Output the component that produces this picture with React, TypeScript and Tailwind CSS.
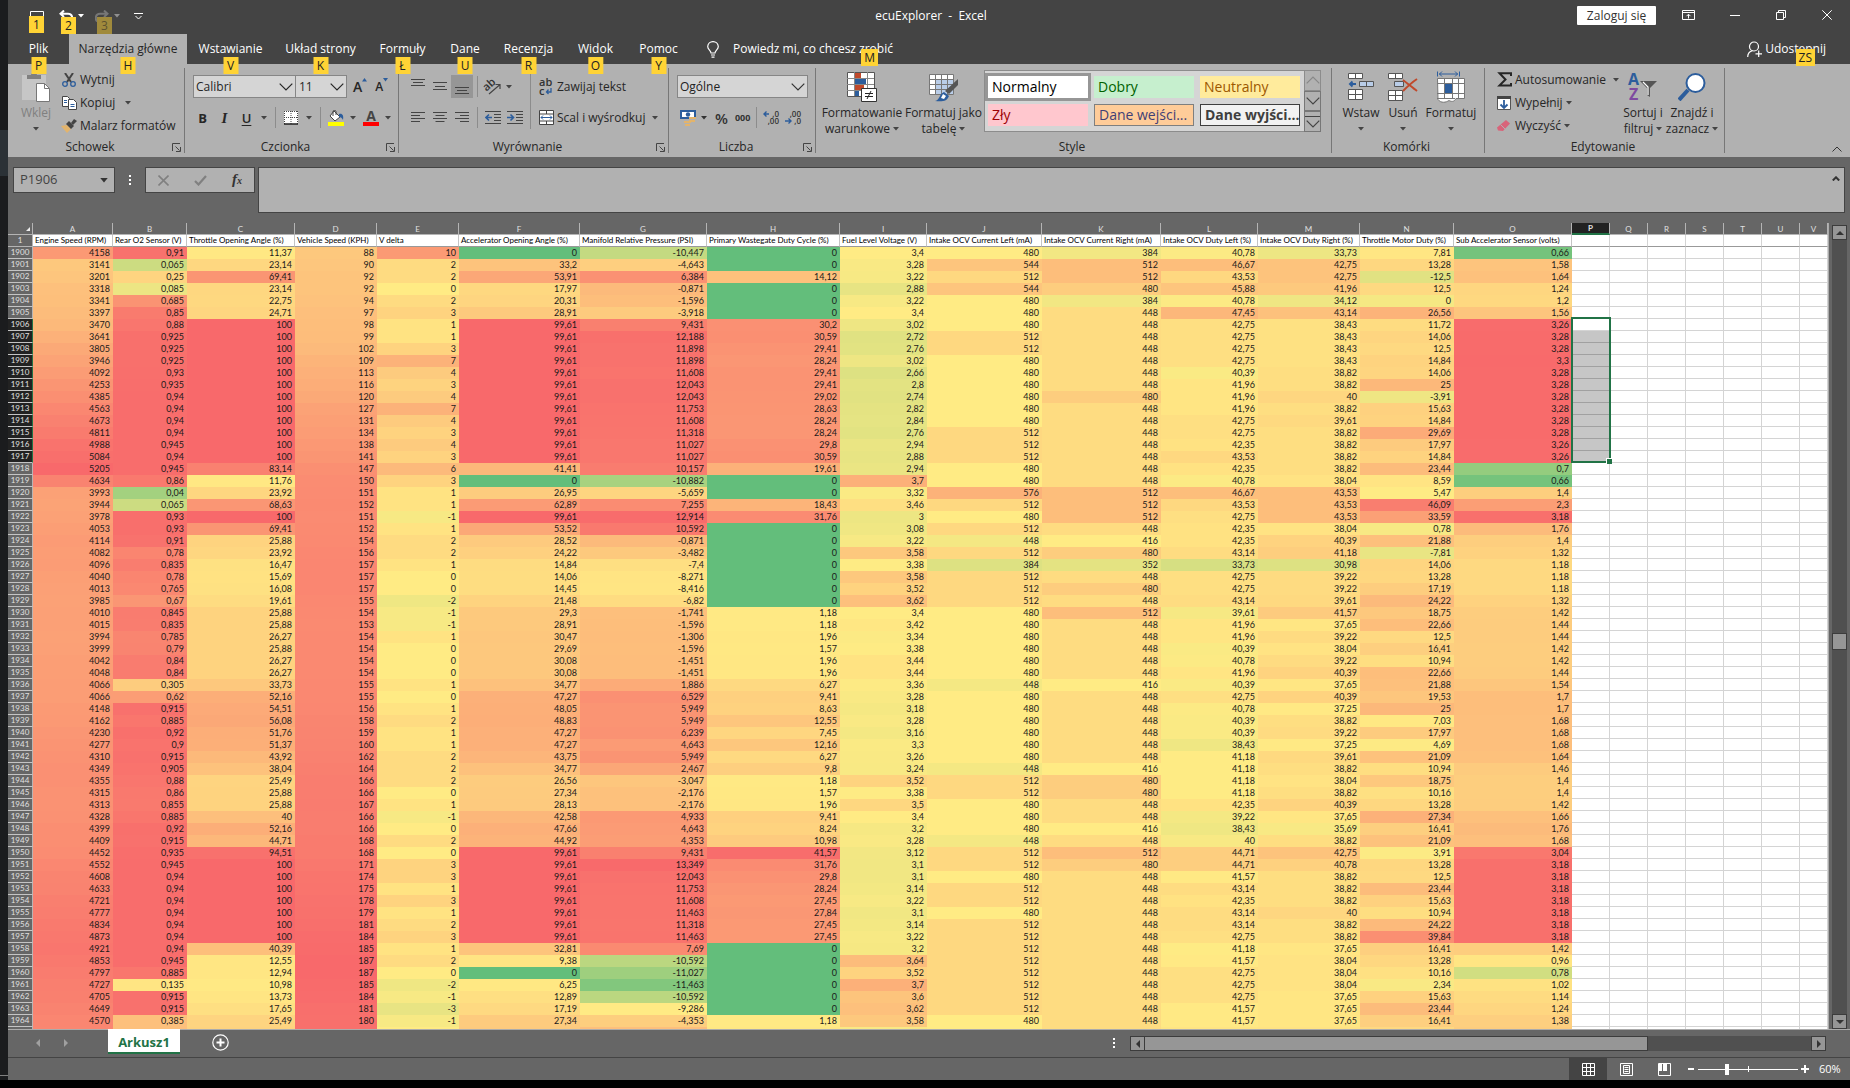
import type { ReactNode } from 'react';

// Three-point colour scale per column: low (green), mid (yellow), high (red)
interface Column {
  letter: string;
  title: string;
  width: string;
  scale: [number, number, number];
}

const columns: Column[] = [
  { letter: 'A', title: 'Engine Speed (RPM)', width: 'w-[80px]', scale: [0, 2378, 5205] },
  { letter: 'B', title: 'Rear O2 Sensor (V)', width: 'w-[74px]', scale: [0, 0.097, 0.97] },
  { letter: 'C', title: 'Throttle Opening Angle (%)', width: 'w-[108px]', scale: [0, 9.4, 100] },
  { letter: 'D', title: 'Vehicle Speed (KPH)', width: 'w-[82px]', scale: [0, 51, 187] },
  { letter: 'E', title: 'V delta', width: 'w-[82px]', scale: [-20, 0, 16] },
  { letter: 'F', title: 'Accelerator Opening Angle (%)', width: 'w-[121px]', scale: [0, 4, 99.61] },
  { letter: 'G', title: 'Manifold Relative Pressure (PSI)', width: 'w-[127px]', scale: [-11.95, -9.53, 13.5] },
  { letter: 'H', title: 'Primary Wastegate Duty Cycle (%)', width: 'w-[133px]', scale: [0, 0.5, 43] },
  { letter: 'I', title: 'Fuel Level Voltage (V)', width: 'w-[87px]', scale: [0, 3.4, 4.06] },
  { letter: 'J', title: 'Intake OCV Current Left (mA)', width: 'w-[115px]', scale: [44, 480, 698] },
  { letter: 'K', title: 'Intake OCV Current Right (mA)', width: 'w-[119px]', scale: [40, 416, 694] },
  { letter: 'L', title: 'Intake OCV Duty Left (%)', width: 'w-[97px]', scale: [12.5, 41.3, 56.8] },
  { letter: 'M', title: 'Intake OCV Duty Right (%)', width: 'w-[102px]', scale: [10, 36.9, 56] },
  { letter: 'N', title: 'Throttle Motor Duty (%)', width: 'w-[94px]', scale: [-91, 6, 54] },
  { letter: 'O', title: 'Sub Accelerator Sensor (volts)', width: 'w-[118px]', scale: [0.636, 0.84, 3.32] },
];

const emptyLetters = ['P', 'Q', 'R', 'S', 'T', 'U', 'V'];

const FIRST_ROW = 1900;
const SELECTION_START = 1906;
const SELECTION_END = 1917;

const rows = `4158 0,91 11,37 88 10 0 -10,447 0 3,4 480 384 40,78 33,73 7,81 0,66
3141 0,065 23,14 90 2 33,2 -4,643 0 3,28 544 512 46,67 42,75 13,28 1,58
3201 0,25 69,41 92 2 53,91 6,384 14,12 3,22 512 512 43,53 42,75 -12,5 1,64
3318 0,085 23,14 92 0 17,97 -0,871 0 2,88 544 480 45,88 41,96 12,5 1,24
3341 0,685 22,75 94 2 20,31 -1,596 0 3,22 480 384 40,78 34,12 0 1,2
3397 0,85 24,71 97 3 28,91 -3,918 0 3,4 480 448 47,45 43,14 26,56 1,56
3470 0,88 100 98 1 99,61 9,431 30,2 3,02 480 448 42,75 38,43 11,72 3,26
3641 0,925 100 99 1 99,61 12,188 30,59 2,72 512 448 42,75 38,43 14,06 3,28
3805 0,925 100 102 3 99,61 11,898 29,41 2,76 512 448 42,75 38,43 12,5 3,28
3946 0,925 100 109 7 99,61 11,898 28,24 3,02 480 448 42,75 38,43 14,84 3,3
4092 0,93 100 113 4 99,61 11,608 29,41 2,66 480 448 40,39 38,82 14,06 3,28
4253 0,935 100 116 3 99,61 12,043 29,41 2,8 480 448 41,96 38,82 25 3,28
4385 0,94 100 120 4 99,61 12,043 29,02 2,74 480 480 41,96 40 -3,91 3,28
4563 0,94 100 127 7 99,61 11,753 28,63 2,82 480 448 41,96 38,82 15,63 3,28
4673 0,94 100 131 4 99,61 11,608 28,24 2,84 480 448 42,75 39,61 14,84 3,28
4811 0,94 100 134 3 99,61 11,318 28,24 2,76 512 448 42,75 38,82 29,69 3,28
4988 0,945 100 138 4 99,61 11,027 29,8 2,94 512 448 42,35 38,82 17,97 3,26
5084 0,94 100 141 3 99,61 11,027 30,59 2,88 512 448 43,53 38,82 14,84 3,26
5205 0,945 83,14 147 6 41,41 10,157 19,61 2,94 480 448 42,35 38,82 23,44 0,7
4634 0,86 11,76 150 3 0 -10,882 0 3,7 480 448 40,78 38,04 8,59 0,66
3993 0,04 23,92 151 1 26,95 -5,659 0 3,32 576 512 46,67 43,53 5,47 1,4
3944 0,065 68,63 152 1 62,89 7,255 18,43 3,46 512 512 43,53 43,53 46,09 2,3
3978 0,93 100 151 -1 99,61 12,914 31,76 3 480 512 42,75 43,53 33,59 3,18
4053 0,93 69,41 152 1 53,52 10,592 0 3,08 512 448 42,35 38,04 0,78 1,76
4114 0,91 25,88 154 2 28,52 -0,871 0 3,22 448 416 42,35 40,39 21,88 1,4
4082 0,78 23,92 156 2 24,22 -3,482 0 3,58 512 480 43,14 41,18 -7,81 1,32
4096 0,835 16,47 157 1 14,84 -7,4 0 3,38 384 352 33,73 30,98 14,06 1,18
4040 0,78 15,69 157 0 14,06 -8,271 0 3,58 512 448 42,75 39,22 13,28 1,18
4013 0,765 16,08 157 0 14,45 -8,416 0 3,52 512 480 42,75 39,22 17,19 1,18
3985 0,67 19,61 155 -2 21,48 -6,82 0 3,62 512 448 43,14 39,61 24,22 1,32
4010 0,845 25,88 154 -1 29,3 -1,741 1,18 3,4 480 512 39,61 41,57 18,75 1,42
4015 0,835 25,88 153 -1 28,91 -1,596 1,18 3,42 480 448 41,96 37,65 22,66 1,44
3994 0,785 26,27 154 1 30,47 -1,306 1,96 3,34 480 448 41,96 39,22 12,5 1,44
3999 0,79 25,88 154 0 29,69 -1,596 1,57 3,38 480 448 40,39 38,04 16,41 1,42
4042 0,84 26,27 154 0 30,08 -1,451 1,96 3,44 480 448 40,78 39,22 10,94 1,42
4048 0,84 26,27 154 0 30,08 -1,451 1,96 3,44 480 448 41,96 40,39 22,66 1,44
4066 0,305 33,73 155 1 34,77 1,886 6,27 3,36 448 416 40,39 37,65 21,88 1,54
4066 0,62 52,16 155 0 47,27 6,529 9,41 3,28 480 448 42,75 40,39 19,53 1,7
4148 0,915 54,51 156 1 48,05 5,949 8,63 3,18 480 448 40,78 37,25 25 1,7
4162 0,885 56,08 158 2 48,83 5,949 12,55 3,28 480 448 40,39 38,82 7,03 1,68
4230 0,92 51,76 159 1 47,27 6,239 7,45 3,16 480 448 40,39 39,22 17,97 1,68
4277 0,9 51,37 160 1 47,27 4,643 12,16 3,3 480 448 38,43 37,25 4,69 1,68
4310 0,915 43,92 162 2 43,75 5,949 6,27 3,26 480 448 41,18 39,61 21,09 1,64
4349 0,905 38,04 164 2 34,77 2,467 9,8 3,24 448 416 41,18 38,82 10,94 1,46
4355 0,88 25,49 166 2 26,56 -3,047 1,18 3,52 512 480 41,18 38,04 18,75 1,4
4315 0,86 25,88 166 0 27,34 -2,176 1,57 3,38 512 480 41,18 38,82 10,16 1,4
4313 0,855 25,88 167 1 28,13 -2,176 1,96 3,5 480 448 42,35 40,39 13,28 1,42
4328 0,885 40 166 -1 42,58 4,933 9,41 3,4 480 448 39,22 37,65 27,34 1,66
4399 0,92 52,16 166 0 47,66 4,643 8,24 3,2 480 416 38,43 35,69 16,41 1,76
4409 0,915 44,71 168 2 44,92 4,353 10,98 3,28 448 448 40 38,82 21,09 1,68
4452 0,935 94,51 168 0 99,61 9,431 41,57 3,12 512 512 44,71 42,75 3,91 3,04
4552 0,945 100 171 3 99,61 13,349 31,76 3,1 512 480 44,71 40,78 13,28 3,18
4608 0,94 100 174 3 99,61 12,043 29,8 3,1 480 448 41,57 38,82 12,5 3,18
4633 0,94 100 175 1 99,61 11,753 28,24 3,14 512 448 43,14 38,82 23,44 3,18
4721 0,94 100 178 3 99,61 11,608 27,45 3,22 512 448 42,35 38,82 15,63 3,18
4777 0,94 100 179 1 99,61 11,463 27,84 3,1 480 448 43,14 40 10,94 3,18
4834 0,94 100 181 2 99,61 11,318 27,45 3,14 512 448 43,14 38,82 24,22 3,18
4873 0,94 100 184 3 99,61 11,463 27,45 3,22 512 448 42,75 38,82 39,84 3,18
4921 0,94 40,39 185 1 32,81 7,69 0 3,2 512 448 41,18 37,65 16,41 1,42
4853 0,945 12,55 187 2 9,38 -10,592 0 3,64 512 448 41,57 38,04 13,28 0,96
4797 0,885 12,94 187 0 0 -11,027 0 3,52 512 448 42,75 38,04 10,16 0,78
4727 0,135 10,98 185 -2 6,25 -11,463 0 3,7 512 448 42,75 38,04 2,34 1,02
4705 0,915 13,73 184 -1 12,89 -10,592 0 3,6 512 448 42,75 37,65 15,63 1,14
4649 0,915 17,65 181 -3 17,19 -9,286 0 3,62 512 448 41,57 37,65 23,44 1,24
4570 0,385 25,49 180 -1 27,34 -4,353 1,18 3,58 480 448 41,57 37,65 16,41 1,38
4552 0,385 26,27 180 0 28,13 -1,741 1,57 3,28 480 448 41,96 38,04 12,5 1,42`
  .split('\n')
  .map((line) => line.split(' '));

const GREEN = [99, 190, 123];
const YELLOW = [255, 235, 132];
const RED = [248, 105, 107];

function scaleColor(text: string, [low, mid, high]: [number, number, number]) {
  const value = parseFloat(text.replace(',', '.'));
  const [from, to] = value < mid ? [GREEN, YELLOW] : [YELLOW, RED];
  const raw = value < mid ? (value - low) / (mid - low) : (value - mid) / (high - mid);
  const t = Math.min(1, Math.max(0, raw));
  return `rgb(${from.map((c, i) => Math.round(c + (to[i] - c) * t)).join(',')})`;
}

function Arrow({ className = '' }: { className?: string }) {
  return (
    <svg viewBox="0 0 6 4" className={`w-[6px] h-[4px] shrink-0 ${className}`}>
      <path d="M0 0h6L3 3.6z" fill="currentColor" />
    </svg>
  );
}

function Chevron({ className = '' }: { className?: string }) {
  return (
    <svg viewBox="0 0 14 8" className={`w-[14px] h-[8px] ${className}`} fill="none" stroke="currentColor">
      <path d="M.7.7 7 7 13.3.7" strokeWidth="1.2" />
    </svg>
  );
}

function KeyTip({ children, className = '' }: { children: ReactNode; className?: string }) {
  return (
    <span
      className={`absolute z-10 h-[17px] min-w-[15px] px-[3px] text-center text-[12px] leading-[17px] bg-[#ffd335] text-[#222] ${className}`}
    >
      {children}
    </span>
  );
}

function TitleBar() {
  return (
    <header className="relative flex items-center h-[34px] text-white">
      <div className="flex items-start pl-[22px] pt-[10px] h-full flex-1">
        <button type="button" aria-label="Zapisz" className="relative w-[14px] h-[16px]">
          <svg viewBox="0 0 14 14" className="w-[14px] h-[14px]" fill="none" stroke="#fff">
            <path d="M.5.5h13v13H.5z" />
          </svg>
          <KeyTip className="-left-px top-[6px]">1</KeyTip>
        </button>
        <button type="button" aria-label="Cofnij" className="relative flex items-center ml-[15px] gap-[5px]">
          <svg viewBox="0 0 14 12" className="w-[14px] h-[12px]" fill="none" stroke="#fff" strokeWidth="2">
            <path d="M5 .5 1.5 3.8 5 7M2 3.8h7c3 0 4.2 2 4.2 4.5S12 11.5 10 11.5" />
          </svg>
          <Arrow />
          <KeyTip className="left-[2px] top-[7px]">2</KeyTip>
        </button>
        <button type="button" aria-label="Ponów" className="relative flex items-center ml-[11px] gap-[5px] text-[#909090]">
          <svg viewBox="0 0 14 12" className="w-[14px] h-[12px]" fill="none" stroke="#777" strokeWidth="2">
            <path d="M9 .5 12.5 3.8 9 7M12 3.8H5C2 3.8.8 5.8.8 8.3S2 11.5 4 11.5" />
          </svg>
          <Arrow />
          <span className="absolute z-10 left-[2px] top-[7px] h-[17px] w-[15px] text-center text-[12px] leading-[17px] bg-[#a08a3c] text-[#5c5230]">
            3
          </span>
        </button>
        <button type="button" aria-label="Dostosuj pasek" className="ml-[14px] mt-[3px]">
          <svg viewBox="0 0 9 7" className="w-[9px] h-[7px]" fill="none" stroke="#fff">
            <path d="M0 .5h9M1.5 3l3 3 3-3" />
          </svg>
        </button>
      </div>
      <h1 className="text-[12px] whitespace-pre mt-[-2px]">ecuExplorer  -  Excel</h1>
      <div className="flex items-center justify-end flex-1 pr-[18px] mt-[-4px] h-full">
        <button type="button" className="w-[79px] h-[19px] text-[12px] leading-[19px] bg-white text-[#333] rounded-[1px] mr-[26px]">
          Zaloguj się
        </button>
        <button type="button" aria-label="Opcje wstążki" className="mr-[35px]">
          <svg viewBox="0 0 13 10" className="w-[13px] h-[10px]" fill="none" stroke="#fff">
            <path d="M.5.5h12v9H.5zM.5 2.5h12M6.5 8.5v-4M4.5 6.2l2-2 2 2" />
          </svg>
        </button>
        <button type="button" aria-label="Minimalizuj" className="w-[10px] h-px bg-white mr-[36px]" />
        <button type="button" aria-label="Przywróć" className="mr-[36px]">
          <svg viewBox="0 0 10 10" className="w-[10px] h-[10px]" fill="none" stroke="#fff">
            <path d="M.5 2.5h7v7h-7zM2.5 2.5v-2h7v7h-2" />
          </svg>
        </button>
        <button type="button" aria-label="Zamknij">
          <svg viewBox="0 0 10 10" className="w-[10px] h-[10px]" fill="none" stroke="#fff">
            <path d="m.3.3 9.4 9.4M9.7.3.3 9.7" />
          </svg>
        </button>
      </div>
    </header>
  );
}

const tabs = [
  { label: 'Plik', tip: 'P', width: 'w-[61px]' },
  { label: 'Narzędzia główne', tip: 'H', width: 'w-[118px]', active: true },
  { label: 'Wstawianie', tip: 'V', width: 'w-[87px]' },
  { label: 'Układ strony', tip: 'K', width: 'w-[93px]' },
  { label: 'Formuły', tip: 'Ł', width: 'w-[71px]' },
  { label: 'Dane', tip: 'U', width: 'w-[54px]' },
  { label: 'Recenzja', tip: 'R', width: 'w-[73px]' },
  { label: 'Widok', tip: 'O', width: 'w-[61px]' },
  { label: 'Pomoc', tip: 'Y', width: 'w-[65px]' },
];

function TabBar() {
  return (
    <nav className="flex h-[30px] text-[12px] text-white">
      {tabs.map((tab) => (
        <button
          key={tab.label}
          type="button"
          className={`relative shrink-0 whitespace-nowrap ${tab.width} ${tab.active ? 'bg-[#b1b1b1] text-[#262626]' : ''}`}
        >
          {tab.label}
          <KeyTip className="left-1/2 -translate-x-1/2 top-[23px]">{tab.tip}</KeyTip>
        </button>
      ))}
      <button type="button" className="relative flex items-center ml-[16px] whitespace-nowrap">
        <svg viewBox="0 0 12 17" className="w-[12px] h-[17px] mr-[14px]" fill="none" stroke="#fff" strokeWidth="1.2">
          <path d="M4 12c0-2.5-3.3-3.5-3.3-6.5A5.2 5.2 0 0 1 6 .7a5.2 5.2 0 0 1 5.300 4.800C11.300 8.500 8 9.500 8 12zM4 14h4M4.500 16.200h3" />
        </svg>
        Powiedz mi, co chcesz zrobić
        <KeyTip className="right-[15px] top-[15px]">M</KeyTip>
      </button>
      <button type="button" className="relative flex items-center ml-auto mr-[24px]">
        <svg viewBox="0 0 15 17" className="w-[15px] h-[17px] mr-[3px]" fill="none" stroke="#fff" strokeWidth="1.2">
          <circle cx="7" cy="5.5" r="4.5" />
          <path d="M.7 16c0-3.5 2-5.5 4.8-6.3M8.5 12.800H15M11.700 9.500V16" />
        </svg>
        Udostępnij
        <KeyTip className="right-[11px] top-[15px]">ZS</KeyTip>
      </button>
    </nav>
  );
}

function Group({
  label,
  width,
  launcher = false,
  children,
}: {
  label: string;
  width: string;
  launcher?: boolean;
  children: ReactNode;
}) {
  return (
    <section className={`flex flex-col shrink-0 my-1 border-r border-[#777] ${width}`}>
      <div className="flex h-[73px]">{children}</div>
      <div className="flex items-center h-[12px] pr-[3px]">
        <h2 className="flex-1 text-center text-[12px] leading-[12px]">{label}</h2>
        {launcher && (
          <button type="button" aria-label={`${label} – opcje`}>
            <svg viewBox="0 0 9 9" className="w-[9px] h-[9px]" fill="none" stroke="#444">
              <path d="M.5 8V.5H8M3.5 3.5l4 4M8.5 4v4.500H4" />
            </svg>
          </button>
        )}
      </div>
    </section>
  );
}

function RowButton({ icon, label, arrow = '' }: { icon: ReactNode; label: string; arrow?: string }) {
  return (
    <button type="button" className="flex items-center h-[23px] text-[12px] leading-[16px] whitespace-nowrap">
      <span className="flex w-[16px] mr-[3px] justify-center">{icon}</span>
      {label}
      {arrow && <Arrow className={arrow} />}
    </button>
  );
}

function BigButton({
  icon,
  lines,
  width,
  className = '',
}: {
  icon: ReactNode;
  lines: string[];
  width: string;
  className?: string;
}) {
  return (
    <button type="button" className={`flex flex-col items-center text-[12px] leading-[16px] ${width} ${className}`}>
      <span className="flex items-center h-[37px]">{icon}</span>
      <span className="whitespace-nowrap">{lines[0]}</span>
      <span className="flex items-center gap-[3px] h-[16px] whitespace-nowrap">
        {lines[1]}
        <Arrow className="text-[#444]" />
      </span>
    </button>
  );
}

function Divider({ className = 'h-[21px]' }: { className?: string }) {
  return <span className={`w-px bg-[#8c8c8c] shrink-0 ${className}`} />;
}

const alignLines = [
  'M1 3.5h14M1 6.5h9M1 9.5h14M1 12.5h9',
  'M1 3.5h14M3.5 6.5h9M1 9.5h14M3.5 12.5h9',
  'M1 3.5h14M6 6.5h9M1 9.5h14M6 12.5h9',
];
const valignLines = ['M1 1.5h14M3 4.5h10M1 7.5h14', 'M1 4.5h14M3 8.5h10M1 11.5h14', 'M1 9.5h14M3 12.5h10M1 15.5h14'];

function Lines({ d }: { d: string }) {
  return (
    <svg viewBox="0 0 16 17" className="w-[16px] h-[17px]" fill="none" stroke="#444">
      <path d={d} />
    </svg>
  );
}

function Clipboard() {
  return (
    <Group label="Schowek" width="w-[177px]" launcher>
      <BigButton
        width="w-[50px]"
        className="text-[#808080] ml-[3px]"
        lines={['Wklej', '']}
        icon={
          <svg viewBox="0 0 28 30" className="w-[28px] h-[30px]">
            <path d="M0 3h24v25H0z" fill="#c6c6c6" />
            <path d="M5 7V3h4c0-3 6-3 6 0h4v4z" fill="#808080" />
            <path d="M14.500 11.500h8l5 5v13h-13z" fill="#fff" stroke="#777" />
            <path d="M22.500 11.500v5h5" fill="none" stroke="#777" />
          </svg>
        }
      />
      <div className="flex flex-col">
        <RowButton
          label="Wytnij"
          icon={
            <svg viewBox="0 0 14 14" className="w-[14px] h-[14px]" fill="none">
              <path d="M3 0l6 9M11 0L5 9" stroke="#444" strokeWidth="2" />
              <circle cx="3" cy="11" r="2.300" stroke="#2c5d9c" strokeWidth="1.300" />
              <circle cx="11" cy="11" r="2.300" stroke="#2c5d9c" strokeWidth="1.300" />
            </svg>
          }
        />
        <RowButton
          label="Kopiuj"
          arrow="ml-[10px] text-[#444]"
          icon={
            <svg viewBox="0 0 15 14" className="w-[15px] h-[14px]" fill="#fff" stroke="#444">
              <path d="M.5.5h5l2 2v8h-7z" />
              <path d="M6.500 3.500h5l3 3v7h-8z" />
              <path d="M2 4.500h3M2 6.500h3M8.500 8.500h4M8.500 10.500h4" stroke="#2c5d9c" />
            </svg>
          }
        />
        <RowButton
          label="Malarz formatów"
          icon={
            <svg viewBox="0 0 16 14" className="w-[16px] h-[14px]">
              <path d="M0 7l6-1 4 4-4 4z" fill="#e3b46c" />
              <path d="M5 5l3-3 5 5-3 3z" fill="#444" />
              <path d="M10 4l3-4 3 2-4 4z" fill="#444" />
            </svg>
          }
        />
      </div>
    </Group>
  );
}

function FontGroup() {
  return (
    <Group label="Czcionka" width="w-[214px]" launcher>
      <div className="flex flex-col gap-2 pl-2 pt-[7px]">
        <div className="flex items-center h-[23px]">
          <div className="relative flex">
            <select aria-label="Czcionka" className="appearance-none w-[103px] h-[23px] pl-[2px] bg-[#d5d5d5] border border-[#868686] text-[12px] leading-[16px]">
              <option>Calibri</option>
            </select>
            <Chevron className="absolute right-[3px] top-[8px] pointer-events-none" />
          </div>
          <div className="relative flex -ml-px">
            <select aria-label="Rozmiar" className="appearance-none w-[52px] h-[23px] pl-[3px] bg-[#d5d5d5] border border-[#868686] text-[12px] leading-[16px]">
              <option>11</option>
            </select>
            <Chevron className="absolute right-[3px] top-[8px] pointer-events-none" />
          </div>
          <button type="button" aria-label="Zwiększ czcionkę" className="flex ml-[6px] text-[14px] leading-[18px] font-semibold">
            A
            <svg viewBox="0 0 5 4" className="w-[5px] h-[4px]"><path d="M0 3.500 2.500 0 5 3.500z" fill="#2c5d9c" /></svg>
          </button>
          <button type="button" aria-label="Zmniejsz czcionkę" className="flex ml-[8px] text-[12px] leading-[18px] font-semibold">
            A
            <svg viewBox="0 0 5 4" className="w-[5px] h-[4px]"><path d="M0 0h5L2.500 3.500z" fill="#2c5d9c" /></svg>
          </button>
        </div>
        <div className="flex items-center h-[23px] text-[13px] leading-[18px] text-[#444]">
          <button type="button" className="w-[19px] font-bold text-[#262626]">B</button>
          <button type="button" className="w-[25px] text-[15px] font-bold italic font-['Liberation_Serif',serif] text-[#262626]">I</button>
          <button type="button" className="w-[19px] font-semibold underline underline-offset-2 text-[#262626]">U</button>
          <Arrow className="ml-[5px] mr-[8px]" />
          <Divider />
          <svg viewBox="0 0 14 14" className="w-[14px] h-[14px] ml-[8px]" fill="none">
            <path d="M0 0h14v13H0z" fill="#fff" />
            <path d="M.5 0v13M7 0v13M13.500 0v13M0 .5h14M0 6.500h14" stroke="#444" strokeDasharray="1 1" />
            <path d="M0 13h14" stroke="#222" strokeWidth="1.500" />
          </svg>
          <Arrow className="ml-[8px] mr-[8px]" />
          <Divider />
          <svg viewBox="0 0 16 16" className="w-[16px] h-[16px] ml-[7px]">
            <path d="M0 12h16v4H0z" fill="#ff0" />
            <path d="M6 1l6 6-5 4-5-5z" fill="#fff" stroke="#444" />
            <path d="M5 6V1.500C5 0 8 0 8 1.500V5" fill="none" stroke="#444" />
            <path d="M11 4c3-1 5 1 4 6-1-2-2-3-4-3z" fill="#2c5d9c" />
          </svg>
          <Arrow className="ml-[6px] mr-[7px]" />
          <button type="button" aria-label="Kolor czcionki" className="flex items-center flex-col w-[16px] border-b-4 border-[#f00] text-[14px] leading-[12px] font-bold">
            A
          </button>
          <Arrow className="ml-[6px]" />
        </div>
      </div>
    </Group>
  );
}

function IndentIcon({ flip = false }: { flip?: boolean }) {
  return (
    <svg viewBox="0 0 16 14" className="w-[16px] h-[14px]" fill="none" stroke="#444">
      <path d="M0 .5h16M9 3.500h7M9 6.500h7M9 9.500h7M0 12.500h16" />
      <path d={flip ? 'M0 6.500h6M3.500 3.500l3 3-3 3' : 'M1 6.500h6M4 3.500l-3 3 3 3'} stroke="#2c5d9c" strokeWidth="1.600" />
    </svg>
  );
}

function AlignGroup() {
  return (
    <Group label="Wyrównanie" width="w-[270px]" launcher>
      <div className="flex flex-col gap-2 pl-2 pt-[7px] text-[#444]">
        <div className="flex items-center h-[23px]">
          {valignLines.map((d, i) => (
            <button
              key={d}
              type="button"
              aria-label={['Do góry', 'Do środka', 'Do dołu'][i]}
              className={`flex items-center justify-center w-[22px] h-[23px] ${i === 2 ? 'bg-[#969696]' : ''}`}
            >
              <Lines d={d} />
            </button>
          ))}
          <Divider className="h-[21px] mx-[4px]" />
          <svg viewBox="0 0 18 18" className="w-[18px] h-[18px] ml-[2px] overflow-visible">
            <path d="M5 16 15.500 7M16 11V6.500h-4.500" fill="none" stroke="#444" strokeWidth="1.200" />
            <text x="0" y="11" fontSize="11" fontWeight="600" fill="#333" transform="rotate(-42 5 9)">ab</text>
          </svg>
          <Arrow className="ml-[4px]" />
        </div>
        <div className="flex items-center h-[23px]">
          {alignLines.map((d, i) => (
            <button
              key={d}
              type="button"
              aria-label={['Do lewej', 'Wyśrodkuj', 'Do prawej'][i]}
              className="flex items-center justify-center w-[22px] h-[23px]"
            >
              <Lines d={d} />
            </button>
          ))}
          <Divider className="h-[21px] mx-[4px]" />
          <button type="button" aria-label="Zmniejsz wcięcie" className="ml-[3px]"><IndentIcon /></button>
          <button type="button" aria-label="Zwiększ wcięcie" className="ml-[6px]"><IndentIcon flip /></button>
        </div>
      </div>
      <Divider className="h-[56px] mt-[5px] ml-[7px]" />
      <div className="flex flex-col gap-2 pl-[7px] pt-[7px]">
        <RowButton
          label="Zawijaj tekst"
          icon={
            <svg viewBox="0 0 14 18" className="w-[14px] h-[18px] overflow-visible">
              <text x="0" y="8" fontSize="11" fontWeight="600" fill="#333">ab</text>
              <text x="0" y="17" fontSize="11" fontWeight="600" fill="#333">c</text>
              <path d="M12 10v4H7.500M9.500 11.500 7.500 14l2 2" fill="none" stroke="#2c5d9c" strokeWidth="1.300" />
            </svg>
          }
        />
        <RowButton
          label="Scal i wyśrodkuj"
          arrow="ml-[7px] text-[#444]"
          icon={
            <svg viewBox="0 0 15 15" className="w-[15px] h-[15px]" fill="#fff" stroke="#444">
              <path d="M.5.5h14v14H.5zM.5 4h14M.5 11h14M7.500.5V4M7.500 11v3.500" />
              <path d="M2 7.500h11M4 5.500l-2 2 2 2M11 5.500l2 2-2 2" fill="none" stroke="#2c5d9c" />
            </svg>
          }
        />
      </div>
    </Group>
  );
}

function DecimalIcon({ more = false }: { more?: boolean }) {
  return (
    <svg viewBox="0 0 16 15" className="w-[16px] h-[15px] overflow-visible" fontSize="8" fontWeight="600">
      <text x="16" y="7" textAnchor="end" fill="#333">{more ? ',00' : ',0'}</text>
      <text x="16" y="14" textAnchor="end" fill="#333">{more ? ',0' : ',00'}</text>
      <path
        d={more ? 'M0 11h6M3.500 8.500 6 11l-2.500 2.500' : 'M1 4h5M3.500 1.500 1 4l2.500 2.500'}
        fill="none"
        stroke="#2c5d9c"
        strokeWidth="1.400"
      />
    </svg>
  );
}

function NumberGroup() {
  return (
    <Group label="Liczba" width="w-[147px]" launcher>
      <div className="flex flex-col gap-2 pl-2 pt-[7px] text-[#333]">
        <div className="relative flex">
          <select aria-label="Format liczb" className="appearance-none w-[131px] h-[23px] pl-[2px] bg-[#d5d5d5] border border-[#868686] text-[12px] leading-[16px] text-[#222]">
            <option>Ogólne</option>
          </select>
          <Chevron className="absolute right-[3px] top-[8px] pointer-events-none" />
        </div>
        <div className="flex items-center h-[23px]">
          <svg viewBox="0 0 17 17" className="w-[17px] h-[17px] ml-[3px]">
            <path d="M0 1h16v9H0z" fill="#2c5d9c" />
            <path d="M2 3h12v5H2z" fill="#fff" />
            <circle cx="8" cy="5.500" r="2.200" fill="#2c5d9c" />
            <path d="M9 8h7v2H9zM4 12h7v2H4zM9 11h6v2H9zM5 15h5v2H5z" fill="#e3b46c" />
          </svg>
          <Arrow className="ml-[4px]" />
          <button type="button" className="ml-[8px] text-[15px] leading-[16px] font-semibold">%</button>
          <button type="button" className="ml-[7px] text-[9px] leading-[12px] font-bold">000</button>
          <Divider className="h-[21px] mx-[6px]" />
          <button type="button" aria-label="Zwiększ dziesiętne"><DecimalIcon /></button>
          <button type="button" aria-label="Zmniejsz dziesiętne" className="ml-[6px]"><DecimalIcon more /></button>
        </div>
      </div>
    </Group>
  );
}

const cellStyles = [
  { label: 'Normalny', look: 'bg-white text-black outline-3 outline-[#969696]' },
  { label: 'Dobry', look: 'bg-[#c6efce] text-[#006100]' },
  { label: 'Neutralny', look: 'bg-[#ffeb9c] text-[#9c5700]' },
  { label: 'Zły', look: 'bg-[#ffc7ce] text-[#9c0006]' },
  { label: 'Dane wejści...', look: 'bg-[#ffcc99] text-[#3f3f76] border border-[#7f7f7f]' },
  { label: 'Dane wyjści...', look: 'bg-[#f2f2f2] text-[#3f3f3f] border border-[#3f3f3f] font-bold' },
];

function StylesGroup() {
  return (
    <Group label="Style" width="w-[516px]">
      <BigButton
        width="w-[82px]"
        className="ml-[5px]"
        lines={['Formatowanie', 'warunkowe']}
        icon={
          <svg viewBox="0 0 30 30" className="w-[30px] h-[30px]">
            <path d="M.5.5h27v24H.5z" fill="#fff" stroke="#555" />
            <path d="M8 1h6v5H8zM8 13h9v5H8z" fill="#c0492b" />
            <path d="M8 7h11v5H8zM8 19h4v5H8z" fill="#2c5d9c" />
            <path d="M7.500 0v24M20.500 0v24M0 6.500h27M0 12.500h27M0 18.500h27" stroke="#888" fill="none" />
            <path d="M14.500 16.500h15v13h-15z" fill="#fff" stroke="#333" />
            <path d="M18 21.500h8M18 24.500h8M24 19l-4 8" stroke="#222" fill="none" />
          </svg>
        }
      />
      <BigButton
        width="w-[81px]"
        lines={['Formatuj jako', 'tabelę']}
        icon={
          <svg viewBox="0 0 30 30" className="w-[30px] h-[30px]">
            <path d="M.5 2.500h24v20H.5z" fill="#fff" />
            <path d="M6 7h18v15H6z" fill="#b9cde8" />
            <path d="M.5 2.500h24v20H.5zM6.500 2v20M12.500 2v20M18.500 2v20M0 7.500h24M0 12.500h24M0 17.500h24" stroke="#777" fill="none" />
            <path d="M29 7v6L20 22l-4-3z" fill="#555" />
            <path d="M15 20l5 4c-2 5-6 6-14 5 5-1 4-7 9-9z" fill="#2c5d9c" />
            <path d="M14 22l3 2-2 3-3-1z" fill="#fff" />
          </svg>
        }
      />
      <div className="flex w-[337px] h-[62px] mt-[2px] bg-[#d5d5d5] border border-[#8c8c8c]">
        <div className="grid grid-cols-[100px_100px_100px] grid-rows-[22px_22px] gap-[6px] pl-[3px] pt-[5px]">
          {cellStyles.map((s) => (
            <button key={s.label} type="button" className={`px-1 text-left text-[14px] leading-[20px] whitespace-nowrap ${s.look}`}>
              {s.label}
            </button>
          ))}
        </div>
        <div className="flex flex-col w-[17px] ml-auto -mr-px -my-px bg-[#b1b1b1] text-[#444]">
          <button type="button" aria-label="W górę" className="flex items-center justify-center flex-1 border border-[#8c8c8c] text-[#888]">
            <Chevron className="rotate-180" />
          </button>
          <button type="button" aria-label="W dół" className="flex items-center justify-center flex-1 border border-[#777]"><Chevron /></button>
          <button type="button" aria-label="Więcej" className="flex flex-col items-center justify-center gap-[3px] flex-1 border border-[#777]">
            <span className="w-[15px] h-px bg-[#444]" />
            <Chevron />
          </button>
        </div>
      </div>
    </Group>
  );
}

function CellsGroup() {
  return (
    <Group label="Komórki" width="w-[153px]">
      <BigButton
        width="w-[42px]"
        className="ml-[8px]"
        lines={['Wstaw', '']}
        icon={
          <svg viewBox="0 0 26 28" className="w-[26px] h-[28px]" fill="#fff" stroke="#555">
            <path d="M.5.5h14v5H.5zM7.500.5v5M.5 16.500h14v10H.5zM7.500 16.500v10M.5 21.500h14" />
            <path d="M11.500 8.500h14v5h-14zM18.500 8.500v5" fill="#b9cde8" />
            <path d="M2 11h6M4.500 8.500 2 11l2.500 2.500" fill="none" stroke="#2c5d9c" strokeWidth="2" />
          </svg>
        }
      />
      <BigButton
        width="w-[42px]"
        lines={['Usuń', '']}
        icon={
          <svg viewBox="0 0 30 28" className="w-[30px] h-[28px]" fill="#fff" stroke="#555">
            <path d="M.5.5h14v5H.5zM7.500.5v5M.5 17.500h14v10H.5zM7.500 17.500v10M.5 22.500h14" />
            <path d="M6.500 8.500h9v5h-9z" fill="#b9cde8" />
            <path d="M15 7c4 3 10 8 14 11M29 6c-6 4-10 8-14 12" fill="none" stroke="#c0492b" strokeWidth="2" />
          </svg>
        }
      />
      <BigButton
        width="w-[54px]"
        lines={['Formatuj', '']}
        icon={
          <svg viewBox="0 0 28 32" className="w-[28px] h-[32px]" fill="#fff" stroke="#777">
            <path d="M.5.5v5M22.500.5v5M2 3h19M5 .5 2.500 3 5 5.500M18 .5 20.500 3 18 5.500" fill="none" stroke="#2c5d9c" />
            <path d="M.5 7.500h27v20H19c-2 4-5 3-7 2-3 2-8 3-11-1z" />
            <path d="M7.500 7v20M15.500 7v20M21.500 7v20M0 12.500h27M0 22.500h27M0 27.500h18" fill="none" />
            <path d="M8 13h7v9H8z" fill="#2c5d9c" stroke="none" />
          </svg>
        }
      />
    </Group>
  );
}

function EditingGroup() {
  return (
    <Group label="Edytowanie" width="w-[240px]">
      <div className="flex flex-col w-[123px] ml-[11px]">
        <RowButton
          label="Autosumowanie"
          arrow="ml-[7px] text-[#444]"
          icon={
            <svg viewBox="0 0 15 15" className="w-[15px] h-[15px]" fill="none">
              <path d="M14 4V1.200H2.500L8.500 7.500l-6 6H14V11" stroke="#262626" strokeWidth="2" />
            </svg>
          }
        />
        <RowButton
          label="Wypełnij"
          arrow="ml-[3px] text-[#444]"
          icon={
            <svg viewBox="0 0 14 14" className="w-[14px] h-[14px]">
              <path d="M.5.5h13v13H.5z" fill="#fff" stroke="#555" />
              <path d="M0 0h14v3H0z" fill="#444" />
              <path d="M7 4v8M3.500 8.500 7 12l3.500-3.500" fill="none" stroke="#2c5d9c" strokeWidth="1.800" />
            </svg>
          }
        />
        <RowButton
          label="Wyczyść"
          arrow="ml-[3px] text-[#444]"
          icon={
            <svg viewBox="0 0 14 12" className="w-[14px] h-[12px]">
              <path d="M9 0l4 3.500L6 11l-5-.5-1-3z" fill="#d9647a" />
              <path d="M3.500 4.500 8 9" stroke="#b1b1b1" fill="none" />
            </svg>
          }
        />
      </div>
      <BigButton
        width="w-[48px]"
        lines={['Sortuj i', 'filtruj']}
        icon={
          <svg viewBox="0 0 30 28" className="w-[30px] h-[28px] overflow-visible" fontSize="16" fontWeight="700">
            <text x="0" y="12" fill="#2c5d9c">A</text>
            <text x="1" y="27" fill="#7e4aa0">Z</text>
            <path d="M12 8h17l-7 7v9l-3-2v-7z" fill="#555" />
            <path d="M15 9l5 5v8" fill="none" stroke="#fff" strokeWidth="1.200" />
          </svg>
        }
      />
      <BigButton
        width="w-[50px]"
        lines={['Znajdź i', 'zaznacz']}
        icon={
          <svg viewBox="0 0 28 28" className="w-[28px] h-[28px]">
            <path d="M1 27 10 17" stroke="#2c5d9c" strokeWidth="4" />
            <circle cx="17.500" cy="10" r="9" fill="#fff" stroke="#2c5d9c" strokeWidth="2" />
          </svg>
        }
      />
    </Group>
  );
}

function Ribbon() {
  return (
    <div className="flex h-[93px] shrink-0 bg-[#b1b1b1] text-[#262626]">
      <Clipboard />
      <FontGroup />
      <AlignGroup />
      <NumberGroup />
      <StylesGroup />
      <CellsGroup />
      <EditingGroup />
      <button type="button" aria-label="Zwiń wstążkę" className="self-end ml-auto mr-[8px] mb-[5px]">
        <svg viewBox="0 0 10 6" className="w-[10px] h-[6px]" fill="none" stroke="#333">
          <path d="M.5 5.500 5 1l4.500 4.500" />
        </svg>
      </button>
    </div>
  );
}

function FormulaBar() {
  return (
    <div className="flex items-start h-[66px] pt-[10px] pl-[5px] pr-[5px] shrink-0">
      <div className="flex items-center w-[102px] h-[26px] bg-[#b1b1b1] border border-[#444] pr-[6px]">
        <input aria-label="Pole nazwy" defaultValue="P1906" className="flex-1 min-w-0 pl-[6px] bg-transparent text-[13px] text-[#444]" />
        <Arrow className="text-[#333] w-[8px] h-[5px]" />
      </div>
      <div className="flex flex-col gap-[2px] ml-[14px] mt-[8px] w-[2px]">
        <span className="h-[2px] bg-white" />
        <span className="h-[2px] bg-white" />
        <span className="h-[2px] bg-white" />
      </div>
      <div className="flex items-center justify-between w-[110px] h-[26px] ml-[14px] px-[12px] bg-[#b1b1b1] border border-[#444]">
        <button type="button" aria-label="Anuluj">
          <svg viewBox="0 0 11 11" className="w-[11px] h-[11px]" stroke="#808080" strokeWidth="1.600">
            <path d="m.5.5 10 10M10.500.5l-10 10" />
          </svg>
        </button>
        <button type="button" aria-label="Wpis">
          <svg viewBox="0 0 13 11" className="w-[13px] h-[11px]" fill="none" stroke="#808080" strokeWidth="2.200">
            <path d="m1 6 3.500 3.500L12 1" />
          </svg>
        </button>
        <button type="button" className="font-['Liberation_Serif',serif] italic font-bold text-[15px] leading-[20px] text-[#333]">
          f<span className="text-[10px]">x</span>
        </button>
      </div>
      <div className="relative flex-1 ml-[3px]">
        <textarea aria-label="Formuła" className="block w-full h-[46px] resize-none bg-[#b1b1b1] border border-[#444]" />
        <svg viewBox="0 0 8 5" className="absolute right-[5px] top-[9px] w-[8px] h-[5px]" fill="none" stroke="#333" strokeWidth="2">
          <path d="M.8 4.500 4 1.300l3.200 3.200" />
        </svg>
      </div>
    </div>
  );
}

function Sheet() {
  return (
    <div className="flex-1 min-w-0 overflow-hidden border-r border-[#ababab] bg-white">
      <table className="w-full table-fixed border-separate border-spacing-0 font-['Lato',sans-serif] text-[8px] leading-[11px] text-[#1a1a1a]">
        <thead className="text-[#e0e0e0] leading-[10px]">
          <tr className="h-[12px] bg-[#666]">
            <th className="w-[25px] p-0 border-r border-b border-[#b4b4b4]">
              <svg viewBox="0 0 4 4" className="w-[4px] h-[4px] ml-auto mr-[2px]"><path d="M4 0v4H0z" fill="#eee" /></svg>
            </th>
            {columns.map((c) => (
              <th key={c.letter} className={`p-0 font-normal border-r border-b border-[#b4b4b4] ${c.width}`}>{c.letter}</th>
            ))}
            {emptyLetters.map((l) => (
              <th
                key={l}
                className={`p-0 border-r ${l === 'V' ? '' : 'w-[38px]'} ${
                  l === 'P' ? 'bg-[#222] border-b-2 border-b-[#217346] border-r-[#b4b4b4]' : 'font-normal border-b border-[#b4b4b4]'
                }`}
              >
                {l}
              </th>
            ))}
          </tr>
        </thead>
        <tbody>
          <tr className="h-[12px]">
            <th className="p-0 font-normal bg-[#666] text-[#e0e0e0] border-r border-b border-[#b4b4b4]">1</th>
            {columns.map((c) => (
              <td key={c.letter} className="p-0 pl-[2px] whitespace-nowrap text-black border-r border-r-[#c4c4c4] border-b border-b-[#999]">
                {c.title}
              </td>
            ))}
            {emptyLetters.map((l) => (
              <td key={l} className="p-0 border-r border-r-[#d4d4d4] border-b border-b-[#999]" />
            ))}
          </tr>
          {rows.map((row, r) => {
            const number = FIRST_ROW + r;
            const selected = number >= SELECTION_START && number <= SELECTION_END;
            return (
              <tr key={number} className="h-[12px]">
                <th
                  className={`p-0 font-normal border-r border-b border-b-[#c4c4c4] text-[#e0e0e0] ${
                    selected ? 'bg-[#222] border-r-[#217346]' : 'bg-[#666] border-r-[#b4b4b4]'
                  }`}
                >
                  {number}
                </th>
                {columns.map((c, i) => (
                  <td
                    key={c.letter}
                    className="p-0 pr-[3px] text-right text-[9px] leading-[12px]"
                    style={{ backgroundColor: scaleColor(row[i], c.scale) }}
                  >
                    {row[i]}
                  </td>
                ))}
                {emptyLetters.map((l) => (
                  <td
                    key={l}
                    className={`relative p-0 border-r border-b ${
                      l === 'P' && selected && number > SELECTION_START ? 'bg-[#c6c6c6] border-[#a0a0a0]' : 'border-[#d4d4d4]'
                    }`}
                  >
                    {l === 'P' && number === SELECTION_START && (
                      <div className="absolute z-10 -left-px -top-[2px] w-[40px] h-[146px] border-2 border-[#217346]">
                        <span className="absolute -right-[3px] -bottom-[3px] w-[6px] h-[6px] bg-[#217346] border-t border-l border-white" />
                      </div>
                    )}
                  </td>
                ))}
              </tr>
            );
          })}
        </tbody>
      </table>
    </div>
  );
}

function ScrollButton({ label, d }: { label: string; d: string }) {
  return (
    <button type="button" aria-label={label} className="flex items-center justify-center shrink-0 w-[15px] h-[15px] bg-[#969696] border border-[#3c3c3c]">
      <svg viewBox="0 0 8 8" className="w-[8px] h-[8px]"><path d={d} fill="#333" /></svg>
    </button>
  );
}

function SheetTabs() {
  return (
    <div className="flex items-start h-[29px] shrink-0 border-t border-[#ababab] border-b border-b-[#444]">
      <button type="button" aria-label="Poprzedni arkusz" className="ml-[28px] mt-[9px]">
        <svg viewBox="0 0 4 8" className="w-[4px] h-[8px]"><path d="M4 0v8L0 4z" fill="#a0a0a0" /></svg>
      </button>
      <button type="button" aria-label="Następny arkusz" className="ml-[24px] mt-[9px]">
        <svg viewBox="0 0 4 8" className="w-[4px] h-[8px]"><path d="M0 0v8l4-4z" fill="#a0a0a0" /></svg>
      </button>
      <button type="button" className="w-[72px] h-[25px] -mt-px pt-[3px] ml-[40px] bg-white border-b-2 border-[#217346] text-[13px] leading-[18px] font-bold text-[#217346]">
        Arkusz1
      </button>
      <button type="button" aria-label="Nowy arkusz" className="ml-[32px] mt-[4px]">
        <svg viewBox="0 0 17 17" className="w-[17px] h-[17px]" fill="none" stroke="#fff">
          <circle cx="8.500" cy="8.500" r="7.700" strokeWidth="1.200" />
          <path d="M8.500 4.500v8M4.500 8.500h8" strokeWidth="2" />
        </svg>
      </button>
      <div className="flex items-start ml-auto w-[737px]">
        <div className="flex flex-col gap-[2px] mt-[8px] w-[2px]">
          <span className="h-[2px] bg-white" />
          <span className="h-[2px] bg-white" />
          <span className="h-[2px] bg-white" />
        </div>
        <div className="flex flex-1 mt-[6px] ml-[15px] h-[15px] bg-[#505050]">
          <ScrollButton label="Przewiń w lewo" d="M6 0v8L2 4z" />
          <div className="w-[504px] -ml-px bg-[#969696] border border-[#3c3c3c]" />
          <div className="ml-auto flex"><ScrollButton label="Przewiń w prawo" d="M2 0v8l4-4z" /></div>
        </div>
        <div className="w-[24px]" />
      </div>
    </div>
  );
}

function StatusBar() {
  return (
    <footer className="flex items-center justify-end h-[22px] shrink-0 pr-[8px] text-white">
      <button type="button" aria-label="Normalny" className="flex items-center justify-center w-[38px] h-[22px] bg-[#444]">
        <svg viewBox="0 0 13 13" className="w-[13px] h-[13px]" fill="none" stroke="#fff">
          <path d="M.5.5h12v12H.5zM4.500.5v12M8.500.5v12M.5 4.500h12M.5 8.500h12" />
        </svg>
      </button>
      <button type="button" aria-label="Układ strony" className="flex justify-center w-[38px]">
        <svg viewBox="0 0 13 13" className="w-[13px] h-[13px]" fill="none" stroke="#fff">
          <path d="M.5.5h12v12H.5zM3.500 2.500h6v8h-6zM4.500 4.500h4M4.500 6.500h4M4.500 8.500h4" />
        </svg>
      </button>
      <button type="button" aria-label="Podgląd podziału stron" className="flex justify-center w-[38px]">
        <svg viewBox="0 0 13 13" className="w-[13px] h-[13px]">
          <path d="M.5.5h12v12H.5z" fill="none" stroke="#fff" />
          <path d="M1 1h3v7H1zM5 1h4v7H5z" fill="#fff" />
        </svg>
      </button>
      <button type="button" aria-label="Pomniejsz" className="w-[6px] h-[2px] ml-[5px] mr-[4px] bg-white" />
      <div className="relative flex items-center w-[100px] h-[12px]">
        <span className="absolute left-1/2 top-[3px] w-px h-[6px] bg-white" />
        <input
          type="range"
          aria-label="Powiększenie"
          min={0}
          max={100}
          defaultValue={28}
          className="w-full h-px appearance-none bg-white [&::-webkit-slider-thumb]:appearance-none [&::-webkit-slider-thumb]:w-[4px] [&::-webkit-slider-thumb]:h-[11px] [&::-webkit-slider-thumb]:bg-white"
        />
      </div>
      <button type="button" aria-label="Powiększ" className="ml-[3px]">
        <svg viewBox="0 0 8 8" className="w-[8px] h-[8px]"><path d="M4 0v8M0 4h8" stroke="#fff" strokeWidth="2" /></svg>
      </button>
      <span className="ml-[10px] w-[23px] text-[11px] leading-[16px]">60%</span>
    </footer>
  );
}

export default function App() {
  return (
    <div className="flex flex-col h-screen bg-black font-['Open_Sans','Noto_Sans',sans-serif]">
      <div className="flex flex-1 min-h-0">
        <aside className="flex flex-col w-2 shrink-0 bg-[#1b1c1e]">
          <div className="h-[46px] mt-[130px] bg-[#2b3136]" />
          <div className="h-px mt-auto mb-[4px] bg-[#808080]" />
        </aside>
        <main className="flex flex-col flex-1 min-w-0 bg-[#666]">
          <div className="bg-[#444] shrink-0">
            <TitleBar />
            <TabBar />
          </div>
          <Ribbon />
          <FormulaBar />
          <div className="flex flex-1 min-h-0">
            <Sheet />
            <div className="flex flex-col w-[15px] ml-[3px] mr-[3px] mt-[2px] bg-[#505050]">
              <ScrollButton label="Przewiń w górę" d="M0 6h8L4 2z" />
              <div className="flex flex-col flex-1">
                <div className="basis-[393px] shrink" />
                <div className="h-[17px] bg-[#969696] border border-[#3c3c3c]" />
              </div>
              <ScrollButton label="Przewiń w dół" d="M0 2h8L4 6z" />
            </div>
          </div>
          <SheetTabs />
          <StatusBar />
        </main>
      </div>
      <div className="h-2 shrink-0 bg-black" />
    </div>
  );
}
